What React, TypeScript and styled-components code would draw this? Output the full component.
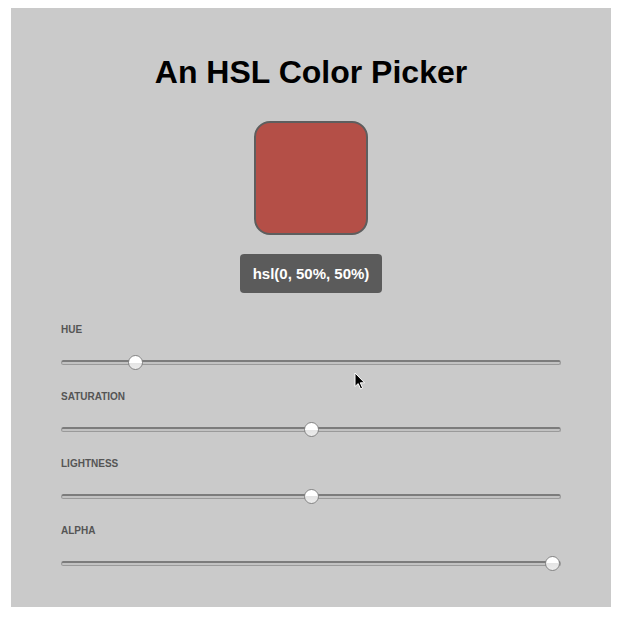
import { useState } from "react";
import { styled, createGlobalStyle } from "styled-components";

const GlobalStyle = createGlobalStyle`
  html, body {
    margin: 0;
    padding: 0;
    background: #ffffff;
  }
  body {
    font-family: "Liberation Sans", Arial, Helvetica, sans-serif;
  }
`;

interface SliderSpec {
  key: "hue" | "saturation" | "lightness" | "alpha";
  label: string;
  max: number;
  step: number;
}

const sliders: SliderSpec[] = [
  { key: "hue", label: "HUE", max: 360, step: 1 },
  { key: "saturation", label: "SATURATION", max: 100, step: 1 },
  { key: "lightness", label: "LIGHTNESS", max: 100, step: 1 },
  { key: "alpha", label: "ALPHA", max: 1, step: 0.01 },
];

export default function App() {
  const [values, setValues] = useState({
    hue: 49,
    saturation: 50,
    lightness: 50,
    alpha: 1,
  });

  const handleChange =
    (key: SliderSpec["key"]) => (e: React.ChangeEvent<HTMLInputElement>) => {
      setValues({ ...values, [key]: Number(e.target.value) });
    };

  return (
    <Page>
      <GlobalStyle />
      <Panel>
        <Title>An HSL Color Picker</Title>
        <Swatch />
        <ValueBadge>hsl(0, 50%, 50%)</ValueBadge>
        <SliderList>
          {sliders.map((slider) => (
            <SliderGroup key={slider.key}>
              <SliderLabel>{slider.label}</SliderLabel>
              <Range
                type="range"
                min={0}
                max={slider.max}
                step={slider.step}
                value={values[slider.key]}
                onChange={handleChange(slider.key)}
              />
            </SliderGroup>
          ))}
        </SliderList>
        <Cursor width="12" height="18" viewBox="0 0 12 18">
          <path
            d="M1 1 L1 14.5 L4.2 11.6 L6.6 17 L8.6 16.1 L6.3 10.8 L10.6 10.8 Z"
            fill="#000"
            stroke="#fff"
            strokeWidth="1"
            strokeLinejoin="round"
          />
        </Cursor>
      </Panel>
    </Page>
  );
}

const Page = styled.div`
  padding: 8px 14px 10px 11px;
`;

const Panel = styled.div`
  position: relative;
  width: 600px;
  height: 599px;
  box-sizing: border-box;
  padding: 46px 50px 0;
  background-color: #cacaca;
  display: flex;
  flex-direction: column;
  align-items: center;
`;

const Title = styled.h1`
  margin: 0;
  font-size: 32px;
  line-height: 37px;
  font-weight: 700;
  color: #000;
`;

const Swatch = styled.div`
  margin-top: 30px;
  width: 114px;
  height: 114px;
  box-sizing: border-box;
  border: 2px solid #5e5e5e;
  border-radius: 16px;
  background-color: #b44f47;
`;

const ValueBadge = styled.div`
  margin-top: 19px;
  width: 142px;
  height: 39px;
  border-radius: 4px;
  background-color: #5b5b5b;
  color: #fff;
  font-size: 15px;
  font-weight: 700;
  display: flex;
  align-items: center;
  justify-content: center;
`;

const SliderList = styled.div`
  margin-top: 31px;
  width: 100%;
  display: flex;
  flex-direction: column;
  gap: 21px;
`;

const SliderGroup = styled.div`
  display: flex;
  flex-direction: column;
  gap: 18px;
`;

const SliderLabel = styled.div`
  font-size: 10px;
  line-height: 12px;
  font-weight: 700;
  color: #555;
`;

const Range = styled.input`
  -webkit-appearance: none;
  appearance: none;
  display: block;
  width: 500px;
  height: 16px;
  margin: 0;
  padding: 0;
  background: transparent;

  &:focus {
    outline: none;
  }

  &::-webkit-slider-runnable-track {
    height: 5px;
    box-sizing: border-box;
    border-radius: 3px;
    border: 1px solid #9a9a9a;
    border-top: 2px solid #7c7c7c;
    background: #c2c2c2;
  }

  &::-webkit-slider-thumb {
    -webkit-appearance: none;
    box-sizing: border-box;
    width: 15px;
    height: 15px;
    margin-top: -7px;
    border-radius: 50%;
    border: 1px solid #858585;
    background: linear-gradient(#ffffff 0%, #ffffff 50%, #e4e4e4 50%, #ececec 100%);
    cursor: pointer;
  }
`;

const Cursor = styled.svg`
  position: absolute;
  left: 343px;
  top: 364px;
  pointer-events: none;
`;
